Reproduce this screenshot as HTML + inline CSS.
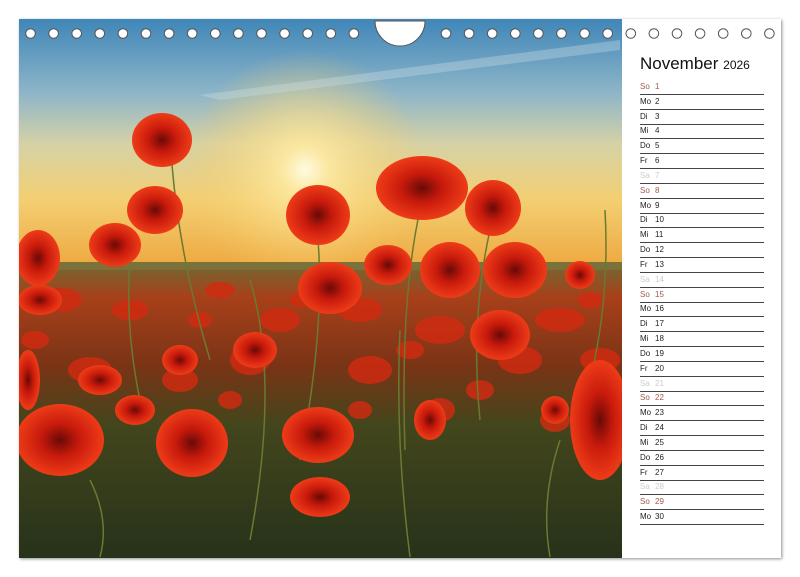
<!DOCTYPE html>
<html><head><meta charset="utf-8"><style>
html,body{margin:0;padding:0;background:#fff;}
body{width:800px;height:577px;position:relative;overflow:hidden;font-family:"Liberation Sans",sans-serif;}
#page{position:absolute;left:19px;top:19px;width:762px;height:539px;background:#fff;box-shadow:1px 1px 3px rgba(0,0,0,0.45);}
#photo{position:absolute;left:19px;top:19px;width:603px;height:539px;}
.title{position:absolute;left:640px;top:54px;font-size:17px;color:#111;white-space:nowrap;}
.title small{font-size:12px;}
.row{position:absolute;left:640px;width:124px;height:14px;border-bottom:1.5px solid #444;font-size:8px;color:#222;}
.row span{position:absolute;top:2px;}
.row .n{left:15px;}
.so{color:#a0584c;}
.sa{color:#ccc;}
</style></head><body>
<div id="page"></div>
<svg id="photo" viewBox="19 19 603 539" width="603" height="539" xmlns="http://www.w3.org/2000/svg">
<defs>
<linearGradient id="sk" x1="0" y1="19" x2="0" y2="270" gradientUnits="userSpaceOnUse">
<stop offset="0" stop-color="#3f86b8"/>
<stop offset="0.3" stop-color="#8fb6c8"/>
<stop offset="0.5" stop-color="#d6d2a6"/>
<stop offset="0.72" stop-color="#f3cf72"/>
<stop offset="1" stop-color="#eea63e"/>
</linearGradient>
<radialGradient id="sun" cx="305" cy="170" r="120" gradientUnits="userSpaceOnUse">
<stop offset="0" stop-color="#fffbe0"/>
<stop offset="0.2" stop-color="#fde9a0" stop-opacity="0.9"/>
<stop offset="1" stop-color="#f6c964" stop-opacity="0"/>
</radialGradient>
<linearGradient id="fld" x1="0" y1="262" x2="0" y2="558" gradientUnits="userSpaceOnUse">
<stop offset="0" stop-color="#6f6a34"/>
<stop offset="0.12" stop-color="#a8401a"/>
<stop offset="0.35" stop-color="#7a3416"/>
<stop offset="0.55" stop-color="#43461c"/>
<stop offset="1" stop-color="#26321a"/>
</linearGradient>
<radialGradient id="pp" cx="0.5" cy="0.5" r="0.5">
<stop offset="0" stop-color="#6a0a06"/>
<stop offset="0.45" stop-color="#c81a0c"/>
<stop offset="1" stop-color="#ee3c18"/>
</radialGradient>
</defs>
<rect x="19" y="19" width="603" height="250" fill="url(#sk)"/>
<rect x="19" y="19" width="603" height="250" fill="url(#sun)"/>
<path d="M200 95 L620 40 L620 50 L220 100Z" fill="#cfe0e6" opacity="0.35"/>
<rect x="19" y="262" width="603" height="296" fill="url(#fld)"/>
<rect x="19" y="262" width="603" height="8" fill="#7f7a40" opacity="0.6"/>
<g fill="#d42a10" opacity="0.8">
<ellipse cx="60" cy="300" rx="22" ry="12"/><ellipse cx="130" cy="310" rx="18" ry="10"/><ellipse cx="220" cy="290" rx="15" ry="8"/><ellipse cx="280" cy="320" rx="20" ry="12"/><ellipse cx="360" cy="310" rx="22" ry="12"/><ellipse cx="440" cy="330" rx="25" ry="14"/><ellipse cx="560" cy="320" rx="25" ry="12"/><ellipse cx="600" cy="360" rx="20" ry="12"/><ellipse cx="90" cy="370" rx="22" ry="13"/><ellipse cx="250" cy="360" rx="20" ry="15"/><ellipse cx="370" cy="370" rx="22" ry="14"/><ellipse cx="520" cy="360" rx="22" ry="14"/><ellipse cx="180" cy="380" rx="18" ry="12"/><ellipse cx="440" cy="410" rx="15" ry="12"/><ellipse cx="555" cy="420" rx="15" ry="12"/><ellipse cx="140" cy="410" rx="15" ry="10"/>
<ellipse cx="200" cy="320" rx="12" ry="8"/><ellipse cx="300" cy="300" rx="10" ry="7"/><ellipse cx="410" cy="350" rx="14" ry="9"/><ellipse cx="590" cy="300" rx="12" ry="8"/><ellipse cx="35" cy="340" rx="14" ry="9"/><ellipse cx="230" cy="400" rx="12" ry="9"/><ellipse cx="480" cy="390" rx="14" ry="10"/><ellipse cx="360" cy="410" rx="12" ry="9"/>
</g>
<g stroke="#6a7a30" stroke-width="1.5" fill="none">
<path d="M172 165 Q180 260 210 360"/><path d="M318 240 Q325 330 300 460"/><path d="M420 210 Q400 300 405 450"/><path d="M490 230 Q470 320 480 420"/><path d="M130 260 Q125 330 140 400"/><path d="M605 210 Q610 300 590 380"/><path d="M250 280 Q280 380 250 540"/>
<path d="M400 330 Q395 440 410 557"/><path d="M90 480 Q110 520 100 557"/><path d="M560 440 Q540 500 550 557"/>
</g>
<g fill="url(#pp)">
<ellipse cx="162" cy="140" rx="30" ry="27"/>
<ellipse cx="155" cy="210" rx="28" ry="24"/>
<ellipse cx="115" cy="245" rx="26" ry="22"/>
<ellipse cx="38" cy="258" rx="22" ry="28"/>
<ellipse cx="318" cy="215" rx="32" ry="30"/>
<ellipse cx="422" cy="188" rx="46" ry="32"/>
<ellipse cx="493" cy="208" rx="28" ry="28"/>
<ellipse cx="330" cy="288" rx="32" ry="26"/>
<ellipse cx="450" cy="270" rx="30" ry="28"/>
<ellipse cx="515" cy="270" rx="32" ry="28"/>
<ellipse cx="388" cy="265" rx="24" ry="20"/>
<ellipse cx="500" cy="335" rx="30" ry="25"/>
<ellipse cx="580" cy="275" rx="15" ry="14"/>
<ellipse cx="60" cy="440" rx="44" ry="36"/>
<ellipse cx="28" cy="380" rx="12" ry="30"/>
<ellipse cx="192" cy="443" rx="36" ry="34"/>
<ellipse cx="318" cy="435" rx="36" ry="28"/>
<ellipse cx="320" cy="497" rx="30" ry="20"/>
<ellipse cx="600" cy="420" rx="30" ry="60"/>
<ellipse cx="135" cy="410" rx="20" ry="15"/>
<ellipse cx="100" cy="380" rx="22" ry="15"/>
<ellipse cx="255" cy="350" rx="22" ry="18"/>
<ellipse cx="180" cy="360" rx="18" ry="15"/>
<ellipse cx="430" cy="420" rx="16" ry="20"/>
<ellipse cx="555" cy="410" rx="14" ry="14"/>
<ellipse cx="40" cy="300" rx="22" ry="15"/>
</g>
</svg>
<svg style="position:absolute;left:0;top:0" width="800" height="577" xmlns="http://www.w3.org/2000/svg">
<g fill="#fff" stroke="#555" stroke-width="1">
<circle cx="30.5" cy="33.5" r="4.8"/><circle cx="53.6" cy="33.5" r="4.8"/><circle cx="76.7" cy="33.5" r="4.8"/><circle cx="99.8" cy="33.5" r="4.8"/><circle cx="122.9" cy="33.5" r="4.8"/><circle cx="146" cy="33.5" r="4.8"/><circle cx="169.1" cy="33.5" r="4.8"/><circle cx="192.2" cy="33.5" r="4.8"/><circle cx="215.3" cy="33.5" r="4.8"/><circle cx="238.4" cy="33.5" r="4.8"/><circle cx="261.5" cy="33.5" r="4.8"/><circle cx="284.6" cy="33.5" r="4.8"/><circle cx="307.7" cy="33.5" r="4.8"/><circle cx="330.8" cy="33.5" r="4.8"/><circle cx="353.9" cy="33.5" r="4.8"/>
<circle cx="446" cy="33.5" r="4.8"/><circle cx="469.1" cy="33.5" r="4.8"/><circle cx="492.2" cy="33.5" r="4.8"/><circle cx="515.3" cy="33.5" r="4.8"/><circle cx="538.4" cy="33.5" r="4.8"/><circle cx="561.5" cy="33.5" r="4.8"/><circle cx="584.6" cy="33.5" r="4.8"/><circle cx="607.7" cy="33.5" r="4.8"/><circle cx="630.8" cy="33.5" r="4.8"/><circle cx="653.9" cy="33.5" r="4.8"/><circle cx="677" cy="33.5" r="4.8"/><circle cx="700.1" cy="33.5" r="4.8"/><circle cx="723.2" cy="33.5" r="4.8"/><circle cx="746.3" cy="33.5" r="4.8"/><circle cx="769.4" cy="33.5" r="4.8"/>
<path d="M375 21 L425 21 A25 25 0 0 1 375 21 Z"/>
</g>
</svg>
<div class="title">November <small>2026</small></div>
<div class="row" style="top:80px"><span class="so">So</span><span class="n so">1</span></div>
<div class="row" style="top:95px"><span>Mo</span><span class="n">2</span></div>
<div class="row" style="top:110px"><span>Di</span><span class="n">3</span></div>
<div class="row" style="top:124px"><span>Mi</span><span class="n">4</span></div>
<div class="row" style="top:139px"><span>Do</span><span class="n">5</span></div>
<div class="row" style="top:154px"><span>Fr</span><span class="n">6</span></div>
<div class="row" style="top:169px"><span class="sa">Sa</span><span class="n sa">7</span></div>
<div class="row" style="top:184px"><span class="so">So</span><span class="n so">8</span></div>
<div class="row" style="top:199px"><span>Mo</span><span class="n">9</span></div>
<div class="row" style="top:213px"><span>Di</span><span class="n">10</span></div>
<div class="row" style="top:228px"><span>Mi</span><span class="n">11</span></div>
<div class="row" style="top:243px"><span>Do</span><span class="n">12</span></div>
<div class="row" style="top:258px"><span>Fr</span><span class="n">13</span></div>
<div class="row" style="top:273px"><span class="sa">Sa</span><span class="n sa">14</span></div>
<div class="row" style="top:288px"><span class="so">So</span><span class="n so">15</span></div>
<div class="row" style="top:302px"><span>Mo</span><span class="n">16</span></div>
<div class="row" style="top:317px"><span>Di</span><span class="n">17</span></div>
<div class="row" style="top:332px"><span>Mi</span><span class="n">18</span></div>
<div class="row" style="top:347px"><span>Do</span><span class="n">19</span></div>
<div class="row" style="top:362px"><span>Fr</span><span class="n">20</span></div>
<div class="row" style="top:377px"><span class="sa">Sa</span><span class="n sa">21</span></div>
<div class="row" style="top:391px"><span class="so">So</span><span class="n so">22</span></div>
<div class="row" style="top:406px"><span>Mo</span><span class="n">23</span></div>
<div class="row" style="top:421px"><span>Di</span><span class="n">24</span></div>
<div class="row" style="top:436px"><span>Mi</span><span class="n">25</span></div>
<div class="row" style="top:451px"><span>Do</span><span class="n">26</span></div>
<div class="row" style="top:466px"><span>Fr</span><span class="n">27</span></div>
<div class="row" style="top:480px"><span class="sa">Sa</span><span class="n sa">28</span></div>
<div class="row" style="top:495px"><span class="so">So</span><span class="n so">29</span></div>
<div class="row" style="top:510px"><span>Mo</span><span class="n">30</span></div>
</body></html>
